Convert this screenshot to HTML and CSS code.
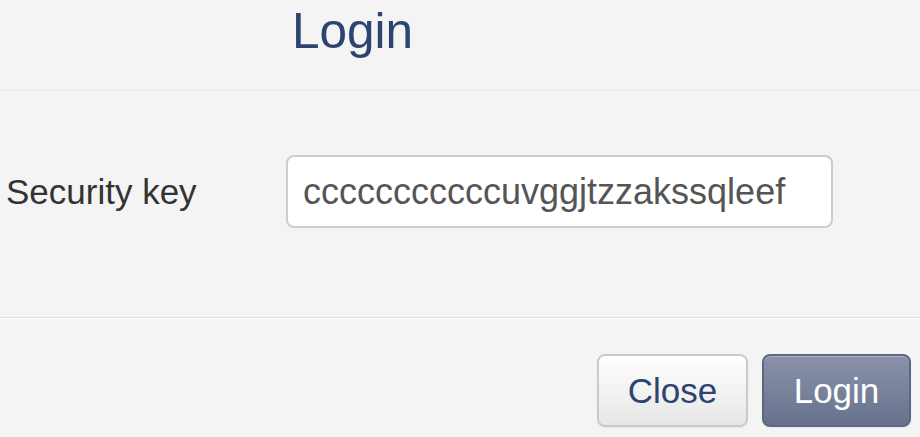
FILE: index.html
```html
<!DOCTYPE html>
<html>
<head>
<meta charset="utf-8">
<link rel="stylesheet" href="styles.css">
</head>
<body>
<div class="modal">
  <div class="modal-header">
    <h3 class="title">Login</h3>
  </div>
  <div class="modal-body">
    <div class="row">
      <label class="label">Security key</label>
      <input class="input" type="text" value="cccccccccccuvggjtzzakssqleef">
    </div>
  </div>
  <div class="modal-footer">
    <button class="btn">Close</button>
    <button class="btn btn-primary">Login</button>
  </div>
</div>
</body>
</html>
```
FILE: styles.css
```css
html, body {
  margin: 0;
  padding: 0;
  background: #f4f4f4;
  font-family: "Liberation Sans", Arial, sans-serif;
}
.modal {
  width: 920px;
  height: 437px;
  display: flex;
  flex-direction: column;
}
.modal-header {
  height: 89px;
  border-bottom: 2px solid #ececec;
  box-sizing: content-box;
}
.title {
  margin: 0;
  padding-left: 292px;
  padding-top: 1px;
  font-size: 49.5px;
  line-height: 60px;
  font-weight: normal;
  color: #2d4370;
}
.modal-body {
  height: 226px;
  box-sizing: border-box;
  padding-top: 64px;
}
.row {
  display: flex;
  align-items: center;
}
.label {
  width: 280px;
  padding-left: 6px;
  font-size: 35px;
  color: #333;
}
.input {
  width: 547px;
  height: 73px;
  box-sizing: border-box;
  border: 2px solid #cccccc;
  border-radius: 8px;
  background: #fff;
  padding: 0 0 0 15px;
  font-family: "Liberation Sans", Arial, sans-serif;
  font-size: 36px;
  color: #555;
  outline: none;
}
.modal-footer {
  border-top: 1px solid #dcdcdc;
  box-shadow: inset 0 1px 0 #ffffff;
  flex: 1;
  display: flex;
  justify-content: flex-end;
  align-items: flex-start;
  gap: 14px;
  padding: 36px 9px 0 0;
}
.btn {
  height: 73px;
  width: 151px;
  box-sizing: border-box;
  border: 2px solid #cacaca;
  border-radius: 8px;
  background: linear-gradient(#ffffff, #e6e6e6);
  font-family: "Liberation Sans", Arial, sans-serif;
  font-size: 35px;
  color: #2d4370;
  padding: 0;
  box-shadow: inset 0 1px 0 rgba(255,255,255,0.3), 0 1px 2px rgba(0,0,0,0.05);
}
.btn-primary {
  width: 149px;
  border-color: #5d6781;
  background: linear-gradient(#8a93a9, #66718c);
  color: #ffffff;
}
```
